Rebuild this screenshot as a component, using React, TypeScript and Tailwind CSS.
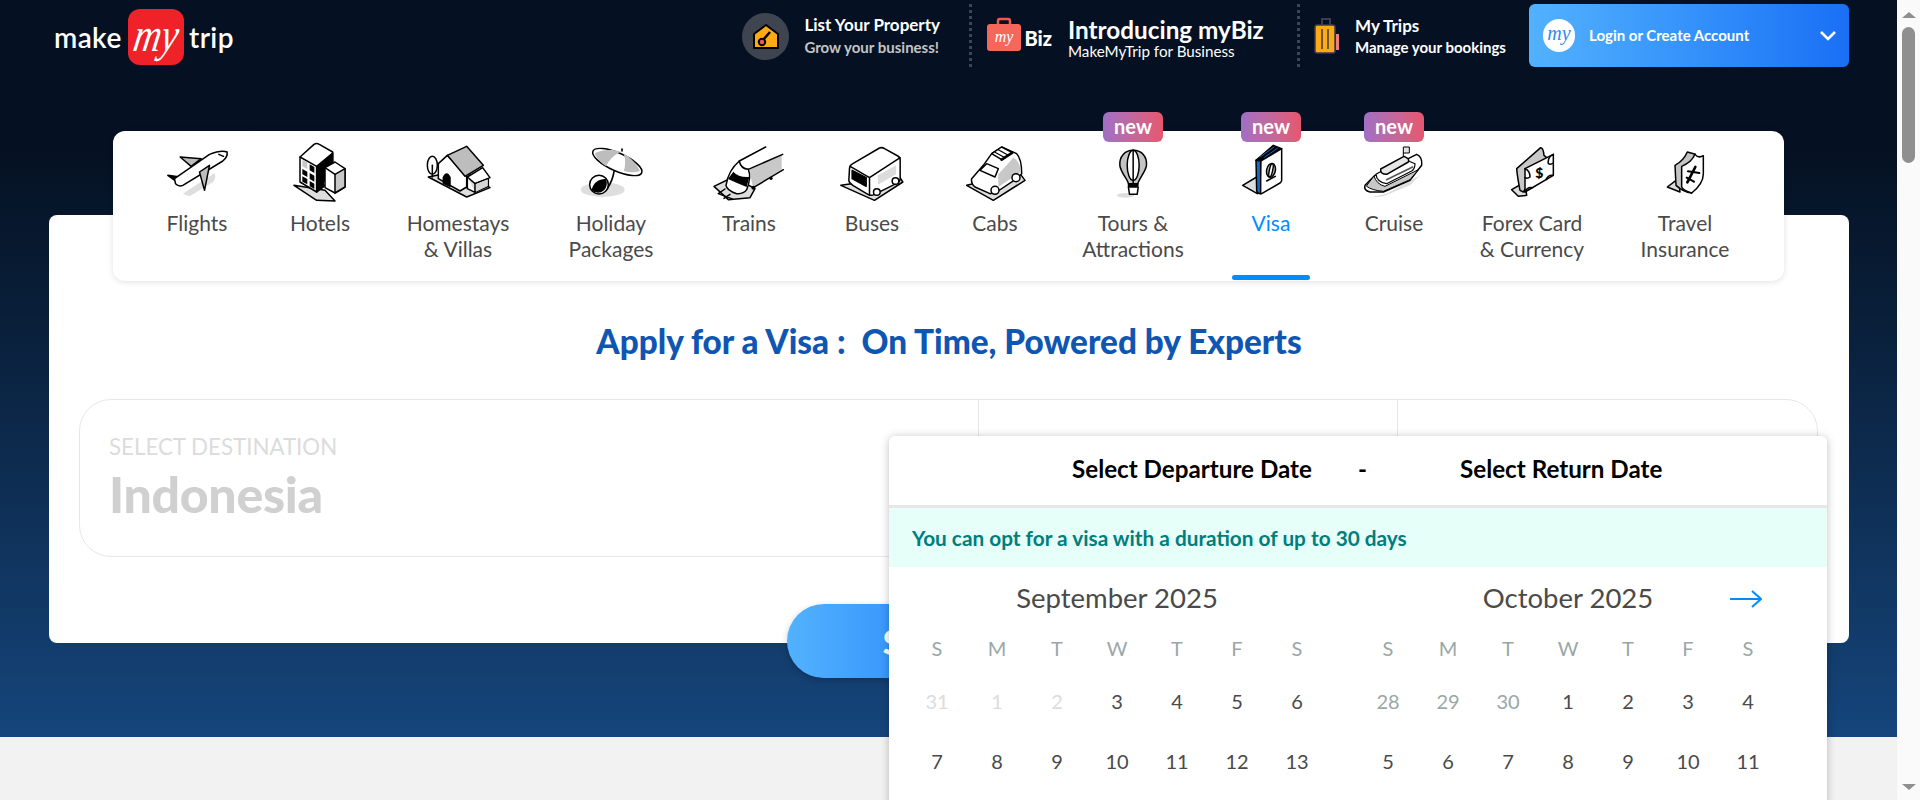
import React from "react";

const lato = "[font-family:Lato,sans-serif]";

const Shadow = ({ points }: { points: string }) => (
    <polygon points={points} fill="#dedede" />
);

const Icon = ({ x, children }: { x: number; children: React.ReactNode }) => (
    <svg viewBox={`${x} 0 300 210`} className="w-[100px] h-[70px] shrink-0">
        <g stroke="#000" strokeWidth="4.5" strokeLinejoin="round" strokeLinecap="round" fill="none">
            {children}
        </g>
    </svg>
);

const icons: Record<string, React.ReactNode> = {
    flights: (
        <Icon x={-37.5}>
            <path d="M70 170 L165 108 Q172 122 160 136 L90 178 Z" fill="#dedede" stroke="none" />
            <path d="M62 60 L125 65 L95 88 Z" fill="#bdbdbd" />
            <path d="M25 115 L62 120 L48 132 Z" fill="#000" />
            <path d="M45 125 L150 52 Q185 38 203 45 Q205 60 190 72 L70 145 Q58 150 48 140 Z" fill="#fff" />
            <path d="M120 105 L150 85 L135 160 Z" fill="#bdbdbd" />
            <path d="M178 52 L192 58" />
        </Icon>
    ),
    hotels: (
        <Icon x={330}>
            <Shadow points="402,145 470,190 525,192 495,160" />
            <path d="M420 60 L462 22 Q470 17 478 22 L518 45 L518 125 L470 165 L420 135 Z" fill="#fff" />
            <path d="M470 88 L518 48 V115 L490 135 V150 L470 165 Z" fill="#000" />
            <path d="M420 60 L470 88 V165" />
            <path d="M427 68 L442 76 V96 L427 88 Z" fill="#c8c8c8" stroke="none" />
            <path d="M449 82 L463 90 V108 L449 100 Z M427 96 L442 104 V120 L427 112 Z M449 108 L463 116 V134 L449 126 Z M427 118 L442 126 V142 L427 134 Z M449 132 L463 140 V156 L449 148 Z" fill="#000" stroke="none" />
            <path d="M495 92 L525 75 L555 95 V150 L525 168 L495 152 Z" fill="#fff" />
            <path d="M525 112 L555 95 V150 L525 168 Z" fill="#c8c8c8" />
            <path d="M495 92 L525 112" />
        </Icon>
    ),
    homestays: (
        <Icon x={744}>
            <Shadow points="805,120 920,180 990,152 905,100" />
            <ellipse cx="817" cy="85" rx="15" ry="27" fill="#fff" />
            <path d="M817 85 V120" />
            <path d="M862 55 L835 80 V125 L900 162 L920 150 V118 Z" fill="#fff" />
            <path d="M862 55 L920 28 L970 85 L915 118 Z" fill="#bdbdbd" />
            <path d="M850 138 V122 Q860 100 870 122 V148 Z" fill="#000" />
            <path d="M922 120 L968 92 L990 122 L945 140 Z" fill="#fff" />
            <path d="M922 120 V155 L945 166 L985 148 V125 L945 140 V166" fill="#fff" />
            <path d="M948 142 L983 127 V147 L948 164 Z" fill="#d6d6d6" stroke="none" />
        </Icon>
    ),
    holiday: (
        <Icon x={1203}>
            <ellipse cx="1328" cy="158" rx="66" ry="22" fill="#dedede" stroke="none" />
            <ellipse cx="1372" cy="75" rx="80" ry="27" transform="rotate(24 1372 75)" fill="#fff" />
            <path d="M1304 50 C1320 38 1360 36 1382 44 Q1350 60 1338 88 Q1315 72 1304 50 Z M1390 48 Q1425 70 1440 102 Q1420 110 1392 102 Q1400 70 1390 48 Z" fill="#bdbdbd" stroke="none" />
            <path d="M1386 36 V42 M1362 104 Q1358 130 1342 155" strokeWidth="5" />
            <circle cx="1317" cy="143" r="28" fill="#fff" />
            <path d="M1295 160 Q1300 128 1338 125 Q1345 145 1332 160 Q1315 175 1295 160 Z" fill="#000" stroke="none" />
        </Icon>
    ),
    trains: (
        <Icon x={-3}>
            <Shadow points="42,148 85,188 150,182 165,155 100,120" />
            <path d="M150 97 L245 52 V97 L160 152 Q152 130 150 97 Z" fill="#c8c8c8" stroke="none" />
            <path d="M118 72 L197 30 M145 97 L248 52 M250 98 L160 152" />
            <path d="M118 72 Q85 100 78 145 Q80 160 110 170 Q130 172 140 158 Q155 120 145 97 Q122 95 118 72 Z" fill="#fff" />
            <path d="M100 104 Q115 122 148 120 L140 150 Q110 138 84 126 Z" fill="#000" stroke="none" />
            <path d="M55 170 L100 187 M75 156 L55 170 M72 184 L90 172" />
            <circle cx="213" cy="124" r="5" fill="#000" stroke="none" />
            <circle cx="160" cy="152" r="6" fill="#000" stroke="none" />
        </Icon>
    ),
    buses: (
        <Icon x={367.5}>
            <Shadow points="424,145 525,190 610,135 600,120" />
            <path d="M450 95 Q450 85 460 80 L540 33 Q548 30 555 35 L595 57 Q603 62 602 70 V125 Q602 135 590 140 L525 172 Q515 178 505 172 L460 145 Q448 138 448 130 Z" fill="#fff" />
            <path d="M452 88 L510 122 L602 62 M510 122 V175" />
            <path d="M458 100 L500 122 V148 L458 125 Z" fill="#000" />
            <path d="M535 115 L590 85 V112 L535 143 Z" fill="#dcdcdc" stroke="none" />
            <circle cx="532" cy="165" r="10" fill="#fff" />
            <circle cx="588" cy="132" r="10" fill="#fff" />
        </Icon>
    ),
    cabs: (
        <Icon x={735}>
            <Shadow points="800,145 880,190 975,130 960,110" />
            <path d="M815 125 L850 85 L875 50 L905 30 L950 50 Q965 65 965 110 L950 125 L890 165 L870 170 L825 150 Q812 140 815 125 Z" fill="#fff" />
            <path d="M895 112 L940 62 Q960 72 962 105 L895 150 Z" fill="#c8c8c8" stroke="none" />
            <path d="M840 100 L860 80 L895 95 L885 120 Z" fill="#fff" />
            <path d="M875 50 L905 30 L937 47 L905 68 Z" fill="#fff" />
            <path d="M885 46 L915 62 M895 38 L925 55" strokeWidth="3.5" />
            <path d="M905 68 L937 47" strokeWidth="8" />
            <circle cx="885" cy="160" r="12" fill="#fff" />
            <circle cx="948" cy="122" r="12" fill="#fff" />
        </Icon>
    ),
    tours: (
        <Icon x={1147.5}>
            <ellipse cx="1275" cy="175" rx="26" ry="7" fill="#dedede" stroke="none" />
            <path d="M1298 40 C1325 40 1340 60 1338 85 C1335 105 1315 125 1312 140 H1284 C1280 125 1260 105 1258 85 C1256 60 1272 40 1298 40 Z" fill="#c4c4c4" />
            <ellipse cx="1298" cy="85" rx="18" ry="45" fill="#fff" />
            <path d="M1298 40 V140" />
            <path d="M1284 140 H1312 V152 H1284 Z" fill="#000" />
            <path d="M1284 152 L1287 172 H1310 L1313 152" fill="#fff" />
        </Icon>
    ),
    visa: (
        <Icon x={-27}>
            <Shadow points="38,145 80,120 82,170" />
            <path d="M78 70 L130 25 L155 35 L92 72 Z" fill="#000" />
            <path d="M90 60 L132 30 M102 62 L142 34" stroke="#1769c9" strokeWidth="3" />
            <path d="M92 72 L155 35 V130 Q155 135 150 138 L95 170 Q90 172 90 165 Z" fill="#fff" />
            <path d="M78 70 L92 72 V170 Q82 170 80 160 Z" fill="#0b6fd0" />
            <ellipse cx="123" cy="100" rx="13" ry="21" transform="rotate(12 123 100)" fill="#bdbdbd" />
            <ellipse cx="123" cy="100" rx="5" ry="20" transform="rotate(12 123 100)" fill="#fff" />
            <path d="M110 132 L136 118" />
        </Icon>
    ),
    cruise: (
        <Icon x={342}>
            <path d="M415 182 L470 170 L570 115 L540 145 L460 178 Z" fill="#dedede" stroke="none" />
            <path d="M520 58 V30 H538 V48 H520" fill="#e4e4e4" strokeWidth="3" />
            <path d="M405 145 L435 115 L560 52 Q578 60 575 85 L540 130 L460 165 L420 165 Q400 160 405 145 Z" fill="#fff" />
            <path d="M432 118 Q440 142 465 148 L565 98 L540 128 L460 163 Q425 160 410 148 Z" fill="#c8c8c8" strokeWidth="3" />
            <path d="M438 112 L520 65 L555 80 Q555 95 545 102 L470 140 Q440 135 438 112 Z" fill="#fff" strokeWidth="3.5" />
            <path d="M452 96 L522 58 Q540 65 535 75 L470 112 Q450 112 452 96 Z" fill="#e6e6e6" />
            <path d="M470 128 L548 90" stroke="#555" strokeWidth="5" strokeDasharray="3 2" />
        </Icon>
    ),
    forex: (
        <Icon x={756}>
            <Shadow points="845,158 885,135 890,175 865,178" />
            <path d="M860 95 L932 32 Q940 32 942 55 L950 62 L880 165 L870 160 Q862 120 860 95 Z" fill="#c8c8c8" />
            <path d="M885 95 L970 52 V115 L885 165 Z" fill="#fff" />
            <path d="M970 52 Q952 60 955 80 Q962 84 970 78 M885 95 Q900 100 900 120 Q892 126 885 122 M970 115 Q955 112 948 128 M885 165 Q892 148 908 152" />
            <text x="928" y="122" fontSize="42" fontWeight="900" fill="#000" stroke="none" textAnchor="middle" fontFamily="Lato, sans-serif">$</text>
        </Icon>
    ),
    insurance: (
        <Icon x={1215}>
            <Shadow points="1312,150 1345,125 1350,165" />
            <path d="M1335 85 Q1360 72 1372 45 L1396 52 L1385 168 Q1360 165 1338 145 Z" fill="#c4c4c4" />
            <path d="M1355 88 Q1385 76 1395 52 Q1405 65 1420 56 V110 Q1420 140 1385 168 Q1360 160 1355 150 Z" fill="#fff" />
            <path d="M1372 136 L1396 90" strokeWidth="8" />
            <path d="M1374 103 L1408 108 M1370 122 L1392 134" strokeWidth="6" />
        </Icon>
    ),
};

const navItems = [
    { key: "flights", lines: ["Flights"], wide: false },
    { key: "hotels", lines: ["Hotels"], wide: false },
    { key: "homestays", lines: ["Homestays", "& Villas"], wide: true },
    { key: "holiday", lines: ["Holiday", "Packages"], wide: true },
    { key: "trains", lines: ["Trains"], wide: false },
    { key: "buses", lines: ["Buses"], wide: false },
    { key: "cabs", lines: ["Cabs"], wide: false },
    { key: "tours", lines: ["Tours &", "Attractions"], wide: true, isNew: true },
    { key: "visa", lines: ["Visa"], wide: false, isNew: true, active: true },
    { key: "cruise", lines: ["Cruise"], wide: false, isNew: true },
    { key: "forex", lines: ["Forex Card", "& Currency"], wide: true },
    { key: "insurance", lines: ["Travel", "Insurance"], wide: true },
];

const NavItem = ({ item }: { item: (typeof navItems)[number] }) => (
    <div className={`relative flex flex-col items-center ${item.wide ? "w-[108px]" : "w-[78px]"}`}>
        {item.isNew && (
            <span className="absolute -top-[19px] left-1/2 -translate-x-1/2 z-10 w-[60px] h-[30px] rounded-md bg-gradient-to-r from-[#a06fc4] to-[#e6566e] text-white font-bold text-[20px] leading-[28px] text-center">
                new
            </span>
        )}
        <div className="mt-[6px] h-[70px] flex justify-center">{icons[item.key]}</div>
        <div className={`mt-[3px] text-[21px] leading-[26px] text-center whitespace-nowrap ${item.active ? "text-[#008cff]" : "text-[#4a4a4a]"}`}>
            {item.lines.map((l) => (
                <div key={l}>{l}</div>
            ))}
        </div>
        {item.active && (
            <div className="absolute top-[144px] left-0 right-0 h-[5px] rounded-sm bg-[#008cff]" />
        )}
    </div>
);

const Month = ({
    title,
    days,
    arrow,
}: {
    title: string;
    days: { d: number; tone?: "off" | "muted" }[];
    arrow?: boolean;
}) => (
    <div className="relative w-[420px]">
        <div className="h-[61px] flex items-center justify-center text-[27.5px] text-[#4a4a4a]">{title}</div>
        {arrow && (
            <svg viewBox="0 0 32 18" className="absolute top-[23px] right-[16px] w-[32px] h-[18px]" fill="none" stroke="#008cff" strokeWidth="2">
                <path d="M0 9 H31 M22 1 L31 9 L22 17" />
            </svg>
        )}
        <div className="grid grid-cols-7 h-[39px] items-center text-center text-[20px] text-[#9aa7a7]">
            {["S", "M", "T", "W", "T", "F", "S"].map((w, i) => (
                <div key={i}>{w}</div>
            ))}
        </div>
        <div className="grid grid-cols-7 mt-[4px] text-center text-[20px] text-[#4a4a4a]">
            {days.map((day, i) => (
                <div
                    key={i}
                    className={`h-[60px] flex items-center justify-center ${
                        day.tone === "off" ? "text-[#dcdcdc]" : day.tone === "muted" ? "text-[#9aa7a7]" : ""
                    }`}
                >
                    {day.d}
                </div>
            ))}
        </div>
    </div>
);

const range = (a: number, b: number) => Array.from({ length: b - a + 1 }, (_, i) => ({ d: a + i }));

const september = [
    { d: 31, tone: "off" as const },
    { d: 1, tone: "off" as const },
    { d: 2, tone: "off" as const },
    ...range(3, 13),
];
const october = [
    { d: 28, tone: "muted" as const },
    { d: 29, tone: "muted" as const },
    { d: 30, tone: "muted" as const },
    ...range(1, 11),
];

const Logo = () => (
    <div className="flex items-center text-white font-semibold text-[28px] tracking-[0.4px] leading-none">
        <span className="w-[74px]">make</span>
        <div className="w-[56px] h-[56px] rounded-xl bg-[#ef2229] flex items-center justify-center">
            <span className="[font-family:'Liberation_Serif',serif] italic font-normal text-[38px] leading-none tracking-normal -skew-x-12 scale-y-125 inline-block pb-1">
                my
            </span>
        </div>
        <span className="ml-[5px]">trip</span>
    </div>
);

export default function App() {
    return (
        <div className={`${lato} w-[1920px] h-[800px] overflow-hidden flex`}>
            <main className="w-[1897px] h-[800px] flex flex-col bg-[#f2f2f2]">
                <section className="h-[737px] shrink-0 bg-gradient-to-b from-[#051122] from-[20%] to-[#15457b]">
                    <div className="w-[1800px] ml-[49px]">
                        <header className="h-[71px] pt-[4px] flex items-start pl-[5px]">
                            <div className="mt-[5px]">
                                <Logo />
                            </div>
                            <div className="ml-auto flex items-start text-white">
                                <div className="flex items-center mt-[9px]">
                                    <div className="w-[47px] h-[47px] rounded-full bg-[#3e4550] flex items-center justify-center">
                                        <svg viewBox="0 0 28 28" className="w-[28px] h-[28px]">
                                            <path d="M14 2 L26 11 V25 H2 V11 Z" fill="#fdab14" stroke="#000" strokeWidth="2" strokeLinejoin="round" />
                                            <path d="M18 9 L11 17" stroke="#000" strokeWidth="2.5" />
                                            <circle cx="10" cy="19" r="3.2" fill="#ef5b5b" stroke="#000" strokeWidth="2" />
                                        </svg>
                                    </div>
                                    <div className="ml-[15px] w-[165px] -mt-[2px]">
                                        <div className="text-[17px] leading-[20px] font-bold">List Your Property</div>
                                        <div className="text-[15px] leading-[20px] font-bold text-[#c4c4c4] mt-[2px]">Grow your business!</div>
                                    </div>
                                </div>
                                <div className="h-[63px] border-l-[3px] border-dotted border-[#3e4550]" />
                                <div className="flex items-center ml-[15px] mt-[13px]">
                                    <svg viewBox="0 0 34 34" className="w-[34px] h-[34px]">
                                        <path d="M11 8 V4 Q11 2 13 2 H21 Q23 2 23 4 V8" fill="none" stroke="#f0584f" strokeWidth="2.5" />
                                        <rect x="0" y="7" width="34" height="27" rx="3" fill="#f4675a" />
                                        <text x="17" y="25" textAnchor="middle" fontSize="16" fontStyle="italic" fill="#fff" fontFamily="'Liberation Serif', serif">my</text>
                                    </svg>
                                    <span className="ml-[3px] mt-[8px] text-[20px] leading-none font-black">Biz</span>
                                </div>
                                <div className="ml-[16px] mt-[13px] w-[229px]">
                                    <div className="text-[24.3px] leading-[26px] font-bold">Introducing myBiz</div>
                                    <div className="text-[15.2px] leading-[17px]">MakeMyTrip for Business</div>
                                </div>
                                <div className="h-[63px] border-l-[3px] border-dotted border-[#3e4550]" />
                                <svg viewBox="0 0 26 36" className="ml-[14px] mt-[14px] w-[26px] h-[36px]">
                                    <path d="M8 7 V1 H16 V7" fill="none" stroke="#3d3b50" strokeWidth="2" />
                                    <rect x="1" y="7" width="20" height="28" rx="2" fill="#fdab14" stroke="#3d3b50" strokeWidth="1.5" />
                                    <path d="M8 11 V31 M14 11 V31" stroke="#3d3b50" strokeWidth="1.5" />
                                    <rect x="22" y="16" width="3" height="16" fill="#ef7f7f" />
                                </svg>
                                <div className="ml-[15px] mt-[12px] w-[174px]">
                                    <div className="text-[17px] leading-[20px] font-bold">My Trips</div>
                                    <div className="text-[15px] leading-[20px] font-bold mt-[1px]">Manage your bookings</div>
                                </div>
                                <button className="w-[320px] h-[63px] rounded-md bg-gradient-to-r from-[#53b2fe] to-[#1a6ff5] flex items-center pl-[14px] pr-[13px]">
                                    <span className="w-[32px] h-[33px] rounded-full bg-white text-[#2b8cf0] [font-family:'Liberation_Serif',serif] italic text-[20px] leading-[28px] text-center">
                                        my
                                    </span>
                                    <span className="ml-[14px] text-[15px] font-bold text-white">Login or Create Account</span>
                                    <svg viewBox="0 0 16 10" className="ml-auto w-[16px] h-[10px]" fill="none" stroke="#fff" strokeWidth="2.6">
                                        <path d="M1 1 L8 8 L15 1" />
                                    </svg>
                                </button>
                            </div>
                        </header>

                        <nav className="relative z-10 mt-[60px] ml-[64px] w-[1671px] h-[150px] bg-white rounded-xl shadow-[0_1px_6px_rgba(0,0,0,0.12)] flex gap-[45px] pl-[45px]">
                            {navItems.map((item) => (
                                <NavItem key={item.key} item={item} />
                            ))}
                        </nav>

                        <div className="relative -mt-[66px] w-[1800px] h-[428px] bg-white rounded-lg pt-[102px]">
                            <h1 className="h-[48px] text-center text-[33.3px] leading-[48px] font-black text-[#0f56b3] whitespace-pre">
                                {"Apply for a Visa :  On Time, Powered by Experts"}
                            </h1>
                            <div className="mt-[34px] ml-[30px] w-[1739px] h-[158px] rounded-[32px] border border-[#e7e7e7] flex">
                                <div className="w-[898px] pl-[29px] pt-[35px]">
                                    <div className="text-[22.3px] leading-[24px] text-[#dcdcdc]">SELECT DESTINATION</div>
                                    <div className="text-[50px] leading-[60px] font-black text-[#d0d0d0] mt-[5px] tracking-[-0.3px]">Indonesia</div>
                                </div>
                                <div className="w-[419px] border-l border-[#e7e7e7]" />
                                <div className="flex-1 border-l border-[#e7e7e7]" />
                            </div>
                            <button className="block mx-auto mt-[47px] w-[324px] h-[74px] rounded-full bg-gradient-to-r from-[#53b2fe] to-[#065af3] text-white font-black text-[34px] shadow-[0_2px_6px_rgba(0,0,0,0.2)]">
                                SEARCH
                            </button>

                            <div className="absolute left-[840px] top-[221px] z-20 w-[938px] h-[400px] bg-white rounded-t-md shadow-[0_1px_8px_rgba(0,0,0,0.25)]">
                                <div className="h-[69px] flex items-center text-[24.2px] font-bold text-black -mt-[1px]">
                                    <span className="ml-[183px] w-[240px] whitespace-nowrap">Select Departure Date</span>
                                    <span className="ml-[46px]">-</span>
                                    <span className="ml-[93px] whitespace-nowrap">Select Return Date</span>
                                </div>
                                <div className="h-[3px] mt-[1px] bg-[#e7e7e7]" />
                                <div className="h-[59px] bg-[#e6fff9] flex items-center pl-[23px] text-[20.8px] font-bold text-[#007e7d]">
                                    You can opt for a visa with a duration of up to 30 days
                                </div>
                                <div className="flex pl-[18px] gap-[31px]">
                                    <Month title="September 2025" days={september} />
                                    <Month title="October 2025" days={october} arrow />
                                </div>
                            </div>
                        </div>
                    </div>
                </section>
                <div className="flex-1" />
            </main>

            <aside className="w-[23px] h-[800px] bg-[#fafafa] flex flex-col items-center">
                <svg viewBox="0 0 14 6" className="mt-[12px] w-[14px] h-[6px]" fill="#8f8f8f">
                    <path d="M7 0 L14 6 H0 Z" />
                </svg>
                <div className="mt-[9px] w-[13px] h-[136px] rounded-full bg-[#8f8f8f]" />
                <svg viewBox="0 0 14 6" className="mt-auto mb-[10px] w-[14px] h-[6px]" fill="#8f8f8f">
                    <path d="M0 0 H14 L7 6 Z" />
                </svg>
            </aside>
        </div>
    );
}
